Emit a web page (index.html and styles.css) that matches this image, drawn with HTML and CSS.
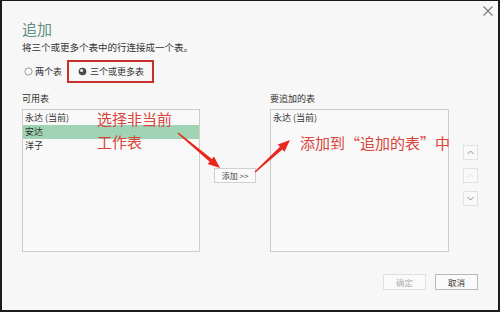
FILE: index.html
```html
<!DOCTYPE html>
<html lang="zh-CN">
<head>
<meta charset="utf-8">
<title>追加</title>
<link rel="stylesheet" href="styles.css">
</head>
<body>
<div class="window">
  <div class="topbar">
    <svg class="close" width="10" height="10" viewBox="0 0 10 10"><path d="M0.5 0.5 L9.5 9.5 M9.5 0.5 L0.5 9.5" stroke="#7a7a7a" stroke-width="1.1" fill="none"/></svg>
  </div>
  <h1 class="title">追加</h1>
  <p class="desc">将三个或更多个表中的行连接成一个表。</p>
  <div class="modes">
    <div class="radio radio-first">
      <svg width="9" height="9" viewBox="0 0 9 9"><circle cx="4.5" cy="4.5" r="3.6" fill="#fbfbfb" stroke="#9a9a9a" stroke-width="1"/></svg>
      <span>两个表</span>
    </div>
    <div class="radio boxed">
      <svg width="9" height="9" viewBox="0 0 9 9"><circle cx="4.5" cy="4.5" r="3.8" fill="#4a4a4a"/><circle cx="3.6" cy="3.6" r="1.5" fill="#f2f2f2"/></svg>
      <span>三个或更多表</span>
    </div>
  </div>
  <div class="panes">
    <div class="pane pane-left">
      <div class="pane-label">可用表</div>
      <div class="list">
        <div class="item">永达 (当前)</div>
        <div class="item item-selected">安达</div>
        <div class="item">洋子</div>
        <div class="note note-left">选择非当前<br>工作表</div>
      </div>
    </div>
    <div class="mid">
      <div class="btn btn-add">添加 &gt;&gt;</div>
    </div>
    <div class="pane pane-right">
      <div class="pane-label">要追加的表</div>
      <div class="list">
        <div class="item">永达 (当前)</div>
        <div class="note note-right">添加到“追加的表”中</div>
      </div>
    </div>
    <div class="order">
      <div class="order-btn"><svg width="7" height="5" viewBox="0 0 7 5"><path d="M0.5 4 L3.5 1 L6.5 4" stroke="#8a8a8a" fill="none" stroke-width="1"/></svg></div>
      <div class="order-btn order-disabled"><svg width="7" height="5" viewBox="0 0 7 5"><path d="M0.5 4 L3.5 1 L6.5 4" stroke="#dcdcdc" fill="none" stroke-width="1"/></svg></div>
      <div class="order-btn"><svg width="7" height="5" viewBox="0 0 7 5"><path d="M0.5 1 L3.5 4 L6.5 1" stroke="#8a8a8a" fill="none" stroke-width="1"/></svg></div>
    </div>
  </div>
  <div class="footer">
    <div class="btn btn-ok">确定</div>
    <div class="btn btn-cancel">取消</div>
  </div>
  <svg class="arrows" width="500" height="312" viewBox="0 0 500 312">
    <polygon fill="#e8281e" points="177.55,133.54 209.65,161.7 207.6,164.1 220,168 214.0,156.5 211.95,158.9 178.45,132.46"/>
    <polygon fill="#e8281e" points="255.47,172.52 282.35,149.43 284.5,151.8 290,140 277.8,144.4 279.93,146.77 254.53,171.48"/>
  </svg>
</div>
</body>
</html>
```

FILE: styles.css
```css
* {
  box-sizing: border-box;
}

body {
  margin: 0;
  font-family: "Noto Sans CJK SC", "Noto Sans", sans-serif;
  color: #333;
}

.window {
  position: relative;
  width: 500px;
  height: 312px;
  background: #f7f7f7;
  border: 2px solid #1b1b1b;
  border-top-width: 1px;
  padding-left: 20px;
}

.topbar {
  height: 18px;
  display: flex;
  justify-content: flex-end;
  padding-right: 5px;
}

.close {
  margin-top: 5px;
}

.title {
  margin: 0;
  font-size: 15px;
  line-height: 20px;
  font-weight: 400;
  color: #5f8f80;
}

.desc {
  margin: 1px 0 0;
  font-size: 9.5px;
  line-height: 14px;
  color: #333;
}

.modes {
  display: flex;
  align-items: center;
  height: 23px;
  margin-top: 6px;
}

.radio {
  display: flex;
  align-items: center;
  gap: 2px;
  font-size: 9px;
  line-height: 12px;
  color: #333;
}

.radio-first {
  margin-left: 2px;
}

.boxed {
  height: 23px;
  margin-left: 5px;
  border: 2px solid #c9302c;
  padding: 0 8px 0 9px;
  gap: 3px;
}

.panes {
  display: flex;
  margin-top: 10px;
}

.pane-left {
  width: 178px;
}

.pane-right {
  width: 179px;
}

.pane-label {
  font-size: 9px;
  line-height: 12px;
  color: #333;
}

.list {
  position: relative;
  margin-top: 4px;
  height: 143px;
  border: 1px solid #cdcdcd;
  background: #f9f9f9;
  padding-top: 1px;
}

.item {
  height: 14px;
  line-height: 14px;
  font-size: 9px;
  padding-left: 2px;
  color: #333;
  white-space: nowrap;
}

.item-selected {
  background: #9fd3b4;
}

.note {
  position: absolute;
  color: #d8443a;
  font-size: 15px;
  line-height: 23px;
  white-space: nowrap;
}

.note-left {
  left: 74px;
  top: -3px;
}

.note-right {
  left: 29px;
  top: 21px;
}

.mid {
  width: 70px;
  display: flex;
  justify-content: center;
  align-items: flex-start;
  padding-top: 75px;
}

.btn {
  display: flex;
  align-items: center;
  justify-content: center;
  border: 1px solid #cfcfcf;
  background: #fafafa;
  color: #444;
}

.btn-add {
  width: 42px;
  height: 15px;
  font-size: 8px;
}

.order {
  display: flex;
  flex-direction: column;
  gap: 8px;
  padding-left: 14px;
  padding-top: 52px;
}

.order-btn {
  width: 15px;
  height: 15px;
  border: 1px solid #e2e2e2;
  background: #f9f9f9;
  display: flex;
  align-items: center;
  justify-content: center;
}

.footer {
  display: flex;
  justify-content: flex-end;
  gap: 9px;
  margin-top: 22px;
  padding-right: 20px;
}

.btn-ok,
.btn-cancel {
  width: 43px;
  height: 16px;
  font-size: 8.5px;
}

.btn-ok {
  border-color: #e0e0e0;
  color: #b0b0b0;
}

.btn-cancel {
  border-color: #b8b8b8;
  color: #333;
}

.arrows {
  position: absolute;
  left: -2px;
  top: -1px;
  pointer-events: none;
}
```
